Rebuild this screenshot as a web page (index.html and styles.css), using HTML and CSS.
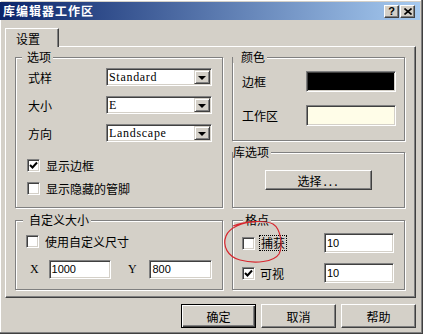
FILE: index.html
```html
<!DOCTYPE html>
<html lang="zh-CN">
<head>
    <meta charset="UTF-8">
    <title>库编辑器工作区</title>
    <link rel="stylesheet" href="styles.css">
</head>
<body>
    <div class="dialog">
        <div class="titlebar">
            <span class="title">库编辑器工作区</span>
            <div class="title-btns">
                <span class="tbtn">?</span>
                <span class="tbtn">
                    <svg width="8" height="7" viewBox="0 0 8 7"><path d="M0.5 0.5 L7.5 6.5 M7.5 0.5 L0.5 6.5" stroke="#000" stroke-width="1.6"/></svg>
                </span>
            </div>
        </div>

        <div class="content">
            <div class="tabs">
                <div class="tab">设置</div>
            </div>

            <div class="panel">
                <div class="col">
                    <div class="group g-options">
                        <div class="group-title">选项</div>
                        <div class="field-row first">
                            <span class="lbl">式样</span>
                            <div class="combo"><span class="combo-text">Standard</span><span class="combo-btn"><i class="arrow"></i></span></div>
                        </div>
                        <div class="field-row">
                            <span class="lbl">大小</span>
                            <div class="combo"><span class="combo-text">E</span><span class="combo-btn"><i class="arrow"></i></span></div>
                        </div>
                        <div class="field-row">
                            <span class="lbl">方向</span>
                            <div class="combo"><span class="combo-text">Landscape</span><span class="combo-btn"><i class="arrow"></i></span></div>
                        </div>
                        <div class="check-row cr-first">
                            <span class="check"><svg width="9" height="9" viewBox="0 0 9 9"><path d="M1 4 L3.5 6.5 L8 1.5" fill="none" stroke="#000" stroke-width="2"/></svg></span>
                            <span>显示边框</span>
                        </div>
                        <div class="check-row cr-second">
                            <span class="check"></span>
                            <span>显示隐藏的管脚</span>
                        </div>
                    </div>

                    <div class="group g-custom">
                        <div class="group-title">自定义大小</div>
                        <div class="check-row cr-custom">
                            <span class="check"></span>
                            <span>使用自定义尺寸</span>
                        </div>
                        <div class="size-row">
                            <span class="axis">X</span>
                            <span class="edit">1000</span>
                            <span class="axis axis-y">Y</span>
                            <span class="edit">800</span>
                        </div>
                    </div>
                </div>

                <div class="col">
                    <div class="group g-color">
                        <div class="group-title">颜色</div>
                        <div class="swatch-row first">
                            <span class="lbl">边框</span>
                            <span class="swatch black"></span>
                        </div>
                        <div class="swatch-row">
                            <span class="lbl">工作区</span>
                            <span class="swatch ivory"></span>
                        </div>
                    </div>

                    <div class="group g-lib">
                        <div class="group-title">库选项</div>
                        <div class="btn lib-btn">选择<span class="dots">...</span></div>
                    </div>

                    <div class="group g-grid">
                        <div class="group-title">格点</div>
                        <div class="grid-row first">
                            <span class="check"></span>
                            <span class="focus">捕获</span>
                            <span class="edit small">10</span>
                        </div>
                        <div class="grid-row">
                            <span class="check"><svg width="9" height="9" viewBox="0 0 9 9"><path d="M1 4 L3.5 6.5 L8 1.5" fill="none" stroke="#000" stroke-width="2"/></svg></span>
                            <span>可视</span>
                            <span class="edit small">10</span>
                        </div>
                    </div>
                </div>
            </div>

            <div class="buttons">
                <div class="btn default">确定</div>
                <div class="btn">取消</div>
                <div class="btn">帮助</div>
            </div>
        </div>

        <!-- hand-drawn annotation over the dialog -->
        <svg class="scribble" width="423" height="336" viewBox="0 0 423 336">
            <path d="M233 226 C245 221 265 220 273 224 C281 229 283 246 279 254 C274 262 255 264 240 260 C228 257 222 246 226 236 C229 228 242 222 255 222" fill="none" stroke="#d8262e" stroke-width="1.2"/>
        </svg>
    </div>
</body>
</html>
```

FILE: styles.css
```css
body {
    margin: 0;
    background: #fff;
    font-family: "Noto Sans CJK SC", "Liberation Sans", sans-serif;
    font-size: 12px;
    color: #000;
}

.dialog {
    position: relative;
    box-sizing: border-box;
    width: 423px;
    height: 334px;
    padding: 2px 2px 0 0;
    background: #d4d0c8;
    border-right: 1px solid #404040;
    border-bottom: 1px solid #404040;
    box-shadow: inset -1px -1px #808080, inset 1px 1px #fff;
    overflow: hidden;
}

.titlebar {
    height: 18px;
    display: flex;
    align-items: center;
    justify-content: space-between;
    padding: 0 5px 0 3px;
    background: linear-gradient(to right, #0a246a, #a6caf0);
    color: #fff;
}

.title {
    font-weight: bold;
    letter-spacing: 1px;
    line-height: 18px;
}

.title-btns {
    display: flex;
    gap: 1px;
}

.tbtn {
    box-sizing: border-box;
    width: 15px;
    height: 13px;
    display: flex;
    align-items: center;
    justify-content: center;
    background: #d4d0c8;
    color: #000;
    font-family: "Liberation Sans", sans-serif;
    font-weight: bold;
    font-size: 11px;
    border: 1px solid;
    border-color: #fff #404040 #404040 #fff;
    box-shadow: inset -1px -1px #808080;
}

.content {
    padding: 8px 0 0 5px;
}

.tabs {
    display: flex;
    height: 18px;
}

.tab {
    position: relative;
    z-index: 1;
    box-sizing: border-box;
    width: 54px;
    height: 19px;
    padding: 3px 0 0 10px;
    line-height: 14px;
    background: #d4d0c8;
    border-top: 1px solid #fff;
    border-left: 1px solid #fff;
    border-right: 1px solid #404040;
    box-shadow: inset -1px 0 #808080;
}

.panel {
    box-sizing: border-box;
    width: 411px;
    height: 252px;
    display: flex;
    gap: 9px;
    padding: 10px 0 0 9px;
    border: 1px solid;
    border-color: #fff #404040 #404040 #fff;
    box-shadow: inset -1px -1px #808080;
}

.col {
    display: flex;
    flex-direction: column;
}

.group {
    box-sizing: border-box;
    border: 1px solid #808080;
    box-shadow: inset 1px 1px #fff, 1px 1px #fff;
}

.group-title {
    display: table;
    height: 12px;
    line-height: 12px;
    margin-top: -7px;
    padding: 0 2px 0 5px;
    background: #d4d0c8;
}

.g-options { width: 208px; height: 151px; padding: 0 10px 0 11px; }
.g-options .group-title { margin-left: -5px; }
.g-custom { width: 208px; height: 70px; margin-top: 12px; padding: 0 10px 0 10px; }
.g-custom .group-title { margin-left: -3px; padding-left: 6px; }

.g-color { width: 173px; height: 84px; padding: 0 8px 0 9px; }
.g-color .group-title { margin-left: -9px; padding-left: 8px; }
.g-lib { width: 173px; height: 56px; margin-top: 11px; }
.g-lib .group-title { margin-left: 0; padding-left: 0; }
.g-grid { width: 173px; height: 70px; margin-top: 12px; padding: 0 10px 0 9px; }
.g-grid .group-title { margin-left: 1px; padding-left: 2px; }

.field-row {
    display: flex;
    align-items: center;
    justify-content: space-between;
    height: 18px;
    margin-top: 10px;
    padding-left: 1px;
}

.field-row.first { margin-top: 5px; }

.combo {
    box-sizing: border-box;
    width: 106px;
    height: 18px;
    display: flex;
    align-items: center;
    justify-content: space-between;
    background: #fff;
    border: 1px solid;
    border-color: #808080 #fff #fff #808080;
    box-shadow: inset 1px 1px #404040, inset -1px -1px #d4d0c8;
    padding: 1px 1px 1px 2px;
}

.combo-text {
    font-family: "Liberation Serif", serif;
    font-size: 12px;
    letter-spacing: 0.7px;
    line-height: 14px;
}

.combo-btn {
    box-sizing: border-box;
    width: 16px;
    height: 14px;
    display: flex;
    align-items: center;
    justify-content: center;
    background: #d4d0c8;
    border: 1px solid;
    border-color: #d4d0c8 #404040 #404040 #d4d0c8;
    box-shadow: inset 1px 1px #fff, inset -1px -1px #808080;
}

.arrow {
    width: 0;
    height: 0;
    border-left: 4px solid transparent;
    border-right: 4px solid transparent;
    border-top: 4px solid #000;
    margin-top: 1px;
}

.check-row {
    display: flex;
    align-items: center;
    gap: 6px;
    height: 13px;
    line-height: 13px;
}

.cr-first { margin-top: 17px; }
.cr-second { margin-top: 10px; }
.cr-custom { margin-top: 9px; }

.check {
    box-sizing: border-box;
    flex: none;
    width: 13px;
    height: 13px;
    display: flex;
    align-items: center;
    justify-content: center;
    background: #fff;
    border: 1px solid;
    border-color: #808080 #fff #fff #808080;
    box-shadow: inset 1px 1px #404040, inset -1px -1px #d4d0c8;
}

.size-row {
    display: flex;
    align-items: center;
    height: 19px;
    margin-top: 12px;
}

.axis {
    width: 19px;
    padding-left: 4px;
    font-family: "Liberation Serif", serif;
    font-size: 12px;
}

.axis-y {
    width: 22px;
    margin-left: 13px;
}

.edit {
    box-sizing: border-box;
    width: 64px;
    height: 19px;
    padding: 0 2px;
    line-height: 17px;
    background: #fff;
    font-family: "Liberation Sans", sans-serif;
    font-size: 11px;
    border: 1px solid;
    border-color: #808080 #fff #fff #808080;
    box-shadow: inset 1px 1px #404040, inset -1px -1px #d4d0c8;
}

.swatch-row {
    display: flex;
    align-items: center;
    justify-content: space-between;
    height: 21px;
    margin-top: 13px;
}

.swatch-row.first { margin-top: 8px; }

.swatch {
    box-sizing: border-box;
    width: 90px;
    height: 21px;
    border: 1px solid;
    border-color: #808080 #fff #fff #808080;
    box-shadow: inset 1px 1px #404040, inset -1px -1px #d4d0c8;
}

.swatch.black { background: #000; }
.swatch.ivory { background: #fffde8; }

.btn {
    box-sizing: border-box;
    display: flex;
    align-items: center;
    justify-content: center;
    background: #d4d0c8;
    border: 1px solid;
    border-color: #fff #404040 #404040 #fff;
    box-shadow: inset -1px -1px #808080;
}

.lib-btn {
    width: 107px;
    height: 20px;
    margin: 12px auto 0;
}

.dots {
    letter-spacing: 2px;
    margin-left: 2px;
}

.grid-row {
    display: flex;
    align-items: center;
    height: 20px;
    margin-top: 10px;
}

.grid-row.first { margin-top: 7px; }

.grid-row .check { margin-right: 5px; }

.focus {
    outline: 1px dotted #000;
    outline-offset: 0;
    padding: 0 1px;
    line-height: 14px;
}

.edit.small {
    width: 70px;
    height: 20px;
    line-height: 18px;
    margin-left: auto;
}

.buttons {
    display: flex;
    justify-content: flex-end;
    gap: 5px;
    width: 411px;
    margin-top: 6px;
}

.buttons .btn {
    width: 75px;
    height: 24px;
}

.btn.default {
    border: 1px solid #000;
    box-shadow: inset 1px 1px #fff, inset -1px -1px #404040, inset -2px -2px #808080;
}

.scribble {
    position: absolute;
    top: 0;
    left: 0;
    pointer-events: none;
}
```
